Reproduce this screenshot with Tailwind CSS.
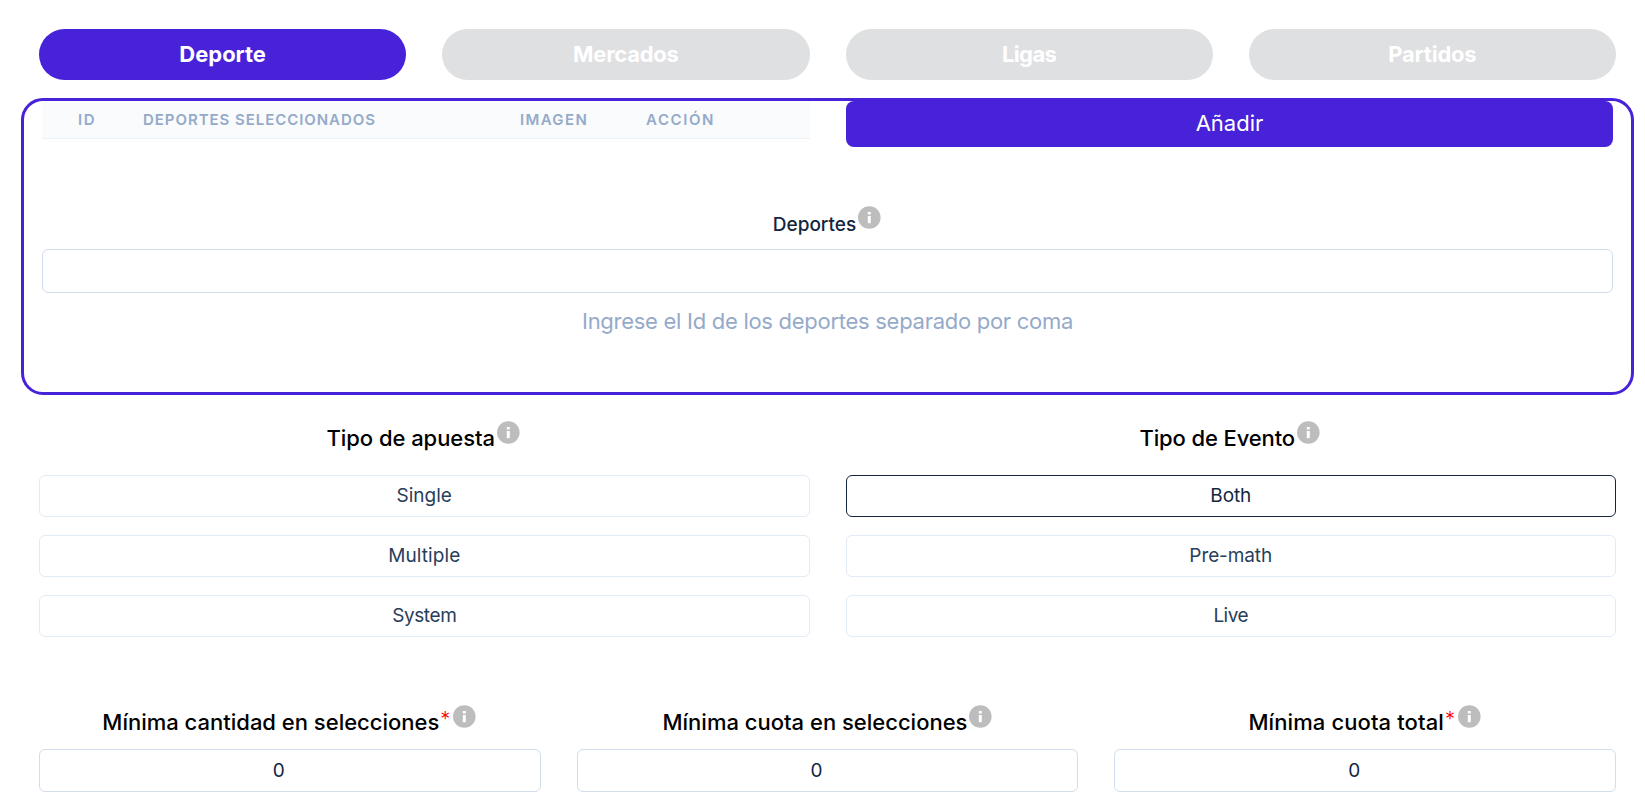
<!DOCTYPE html>
<html lang="es">
<head>
<meta charset="utf-8">
<title>Deportes</title>
<script src="https://cdn.jsdelivr.net/npm/@tailwindcss/browser@4"></script>
</head>
<body class="h-[792px] overflow-hidden bg-white font-['Inter',sans-serif] text-[#12263f]">
<svg class="hidden">
  <symbol id="info" viewBox="0 0 23 23">
    <circle cx="11.3" cy="11.5" r="11.3" fill="#bdbdbd"/>
    <rect x="9.8" y="6" width="3" height="2.5" fill="#fff"/>
    <rect x="9.8" y="10" width="3" height="7.2" fill="#fff"/>
  </symbol>
</svg>

<nav class="mt-[29px] ml-[39px] grid w-[1577px] grid-cols-4 gap-9 text-center text-[22px] leading-[51px] font-bold text-white">
  <button class="h-[51px] rounded-full bg-[#4722d9]">Deporte</button>
  <button class="h-[51px] rounded-full bg-[#dfe0e2] tracking-[-0.25px]">Mercados</button>
  <button class="h-[51px] rounded-full bg-[#dfe0e2] tracking-[-0.6px]">Ligas</button>
  <button class="h-[51px] rounded-full bg-[#dfe0e2] tracking-[-0.2px]">Partidos</button>
</nav>

<section class="mt-[18px] ml-[21px] h-[297px] w-[1613px] rounded-[22px] border-3 border-[#4722d9] px-[18px]">
  <div class="flex items-start justify-between">
    <div class="flex h-[38px] w-[768px] border-b border-[#edf2f9] bg-[#f9fbfd] pl-9 text-[15px] leading-[37px] font-semibold text-[#95aac9]">
      <span class="w-[65px] tracking-[1.6px]">ID</span>
      <span class="w-[377px] tracking-[0.95px]">DEPORTES SELECCIONADOS</span>
      <span class="w-[126px] tracking-[1.35px]">IMAGEN</span>
      <span class="tracking-[1.6px]">ACCIÓN</span>
    </div>
    <button class="h-[46px] w-[767px] rounded-lg bg-[#4722d9] pb-0.5 text-[22px] leading-[44px] text-white">Añadir</button>
  </div>
  <div class="mt-[59px] flex h-[29px] justify-center gap-0.5 pr-px">
    <span class="self-end text-[19px] leading-5 font-medium">Deportes</span>
    <svg class="size-[23px]"><use href="#info"/></svg>
  </div>
  <input class="mt-[14px] block h-11 w-full rounded-md border border-[#d2ddec] bg-white" aria-label="Deportes">
  <p class="mt-4 text-center text-[22px] leading-6 tracking-[-0.28px] text-[#95aac9]">Ingrese el Id de los deportes separado por coma</p>
</section>

<section class="mt-[26px] ml-[39px] grid w-[1577px] grid-cols-2 gap-9">
  <div>
    <div class="flex h-[29px] justify-center gap-0.5 pr-0.5 text-black">
      <span class="self-end text-[22px] leading-6 font-medium tracking-[-0.05px]">Tipo de apuesta</span>
      <svg class="size-[23px]"><use href="#info"/></svg>
    </div>
    <div class="mt-[25px] flex flex-col gap-[18px] text-[19px] text-[#283e59]">
      <button class="h-[42px] rounded-md border border-[#e3ebf6]">Single</button>
      <button class="h-[42px] rounded-md border border-[#e3ebf6] tracking-[0.1px]">Multiple</button>
      <button class="h-[42px] rounded-md border border-[#e3ebf6] tracking-[-0.4px]">System</button>
    </div>
  </div>
  <div>
    <div class="flex h-[29px] justify-center gap-0.5 pr-0.5 text-black">
      <span class="self-end text-[22px] leading-6 font-medium tracking-[-0.12px]">Tipo de Evento</span>
      <svg class="size-[23px]"><use href="#info"/></svg>
    </div>
    <div class="mt-[25px] flex flex-col gap-[18px] text-[19px] text-[#283e59]">
      <button class="h-[42px] rounded-md border border-[#12263f] tracking-[-0.1px] text-[#12263f]">Both</button>
      <button class="h-[42px] rounded-md border border-[#e3ebf6] tracking-[-0.1px]">Pre-math</button>
      <button class="h-[42px] rounded-md border border-[#e3ebf6] tracking-[-0.5px]">Live</button>
    </div>
  </div>
</section>

<section class="mt-[68px] ml-[39px] grid w-[1577px] grid-cols-3 gap-9">
  <div>
    <div class="flex h-[29px] justify-center pr-px text-black">
      <span class="self-end text-[22px] leading-6 font-medium">Mínima cantidad en selecciones</span>
      <span class="mr-[3px] ml-px self-end pb-[3px] text-[20px] leading-6 font-light text-[#ff0000]">*</span>
      <svg class="size-[23px]"><use href="#info"/></svg>
    </div>
    <input class="mt-[15px] block h-[43px] w-full rounded-md border border-[#d2ddec] pr-[22px] text-center text-[19px]" value="0" aria-label="Mínima cantidad en selecciones">
  </div>
  <div>
    <div class="flex h-[29px] justify-center gap-0.5 text-black">
      <span class="self-end text-[22px] leading-6 font-medium">Mínima cuota en selecciones</span>
      <svg class="size-[23px]"><use href="#info"/></svg>
    </div>
    <input class="mt-[15px] block h-[43px] w-full rounded-md border border-[#d2ddec] pr-[22px] text-center text-[19px]" value="0" aria-label="Mínima cuota en selecciones">
  </div>
  <div>
    <div class="flex h-[29px] justify-center pr-px text-black">
      <span class="self-end text-[22px] leading-6 font-medium tracking-[0.1px]">Mínima cuota total</span>
      <span class="mr-[3px] ml-px self-end pb-[3px] text-[20px] leading-6 font-light text-[#ff0000]">*</span>
      <svg class="size-[23px]"><use href="#info"/></svg>
    </div>
    <input class="mt-[15px] block h-[43px] w-full rounded-md border border-[#d2ddec] pr-[22px] text-center text-[19px]" value="0" aria-label="Mínima cuota total">
  </div>
</section>
</body>
</html>
